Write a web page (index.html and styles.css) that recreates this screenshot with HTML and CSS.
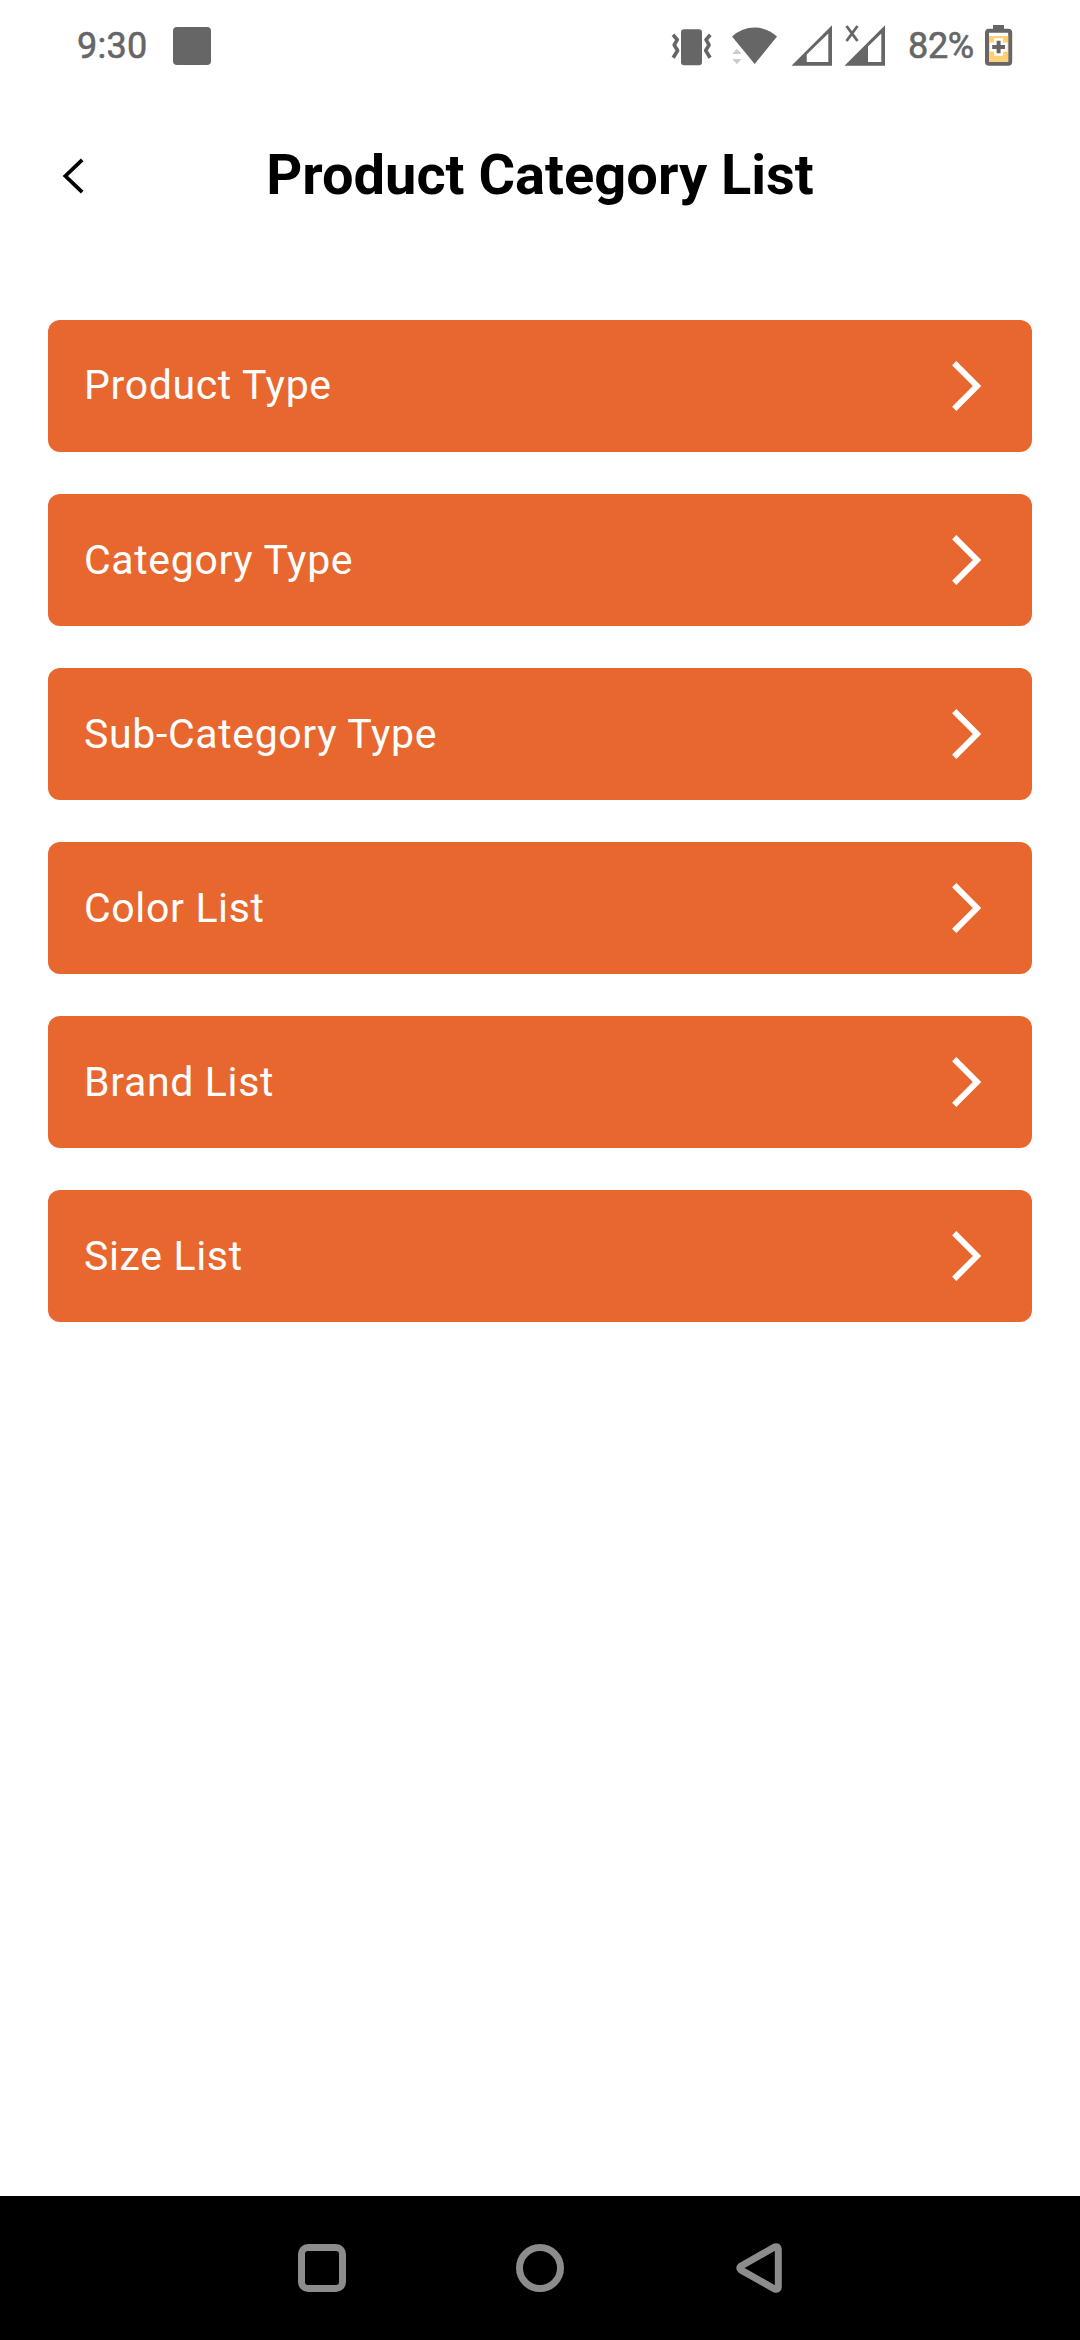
FILE: index.html
```html
<!DOCTYPE html>
<html lang="en">
<head>
<meta charset="utf-8">
<title>Product Category List</title>
<link rel="stylesheet" href="styles.css">
</head>
<body>
<div class="screen">
  <div class="status">
    <span class="clock">9:30</span>
    <span class="notification"></span>
    <svg class="status-icons" width="230" height="90" viewBox="660 0 230 90">
      <g fill="#666">
        <rect x="681" y="29.3" width="21" height="36" rx="3"/>
        <path d="M754.7 64 732 36.6Q742 27.6 754.7 27.6T777 36.6Z"/>
        <path fill="#ccc" d="M732.3 54h9.2l-4.6-5.2zM732.3 59h9.2l-4.6 5.2z"/>
        <path fill-rule="evenodd" d="M791.5 65.7 832 25.2V65.7ZM806.7 62H828.3V33.5L806.7 54.5Z"/>
        <path fill-rule="evenodd" d="M844.5 65.7 885 25.2V65.7ZM868 62H881.3V33.5L868 46.5Z"/>
      </g>
      <g fill="none" stroke="#666" stroke-width="3.6" stroke-linejoin="round">
        <path d="M673 34.8 677.3 39.7 674.2 45 677.6 50.5 673.2 57.7M710.3 34.8 706 39.7 709.1 45 705.7 50.5 710.1 57.7"/>
        <path stroke-width="2.8" d="M846.5 26 857.5 41M857.5 26 846.5 41"/>
      </g>
    </svg>
    <span class="percent">82%</span>
    <svg class="battery" width="28" height="42" viewBox="985 25 28 42">
      <path fill="#666" d="M993 25h11v4h-11z"/>
      <rect x="987" y="30.7" width="23.2" height="33" rx="2" fill="#fff" stroke="#666" stroke-width="4"/>
      <path fill="#ffcf70" d="M989 36h19.2v25.7H989z"/>
      <path stroke="#fff" stroke-width="9" d="M989.7 47h17.8M998.6 38.2v17.6"/>
      <path stroke="#666" stroke-width="4" d="M992.2 47h12.8M998.6 40.7v12.6"/>
    </svg>
  </div>
  <header class="header">
    <svg class="back" width="24" height="38" viewBox="62 157 24 38"><path d="M82.2 159.8 65.4 176 82.2 192.2" fill="none" stroke="#000" stroke-width="3.8"/></svg>
    <h1 class="title">Product Category List</h1>
  </header>
  <main class="list">
    <div class="row"><span>Product Type</span><svg class="chevron" viewBox="0 0 32 52"><path d="M3.2 3.2 26 26 3.2 48.8"/></svg></div>
    <div class="row"><span>Category Type</span><svg class="chevron" viewBox="0 0 32 52"><path d="M3.2 3.2 26 26 3.2 48.8"/></svg></div>
    <div class="row"><span>Sub-Category Type</span><svg class="chevron" viewBox="0 0 32 52"><path d="M3.2 3.2 26 26 3.2 48.8"/></svg></div>
    <div class="row"><span>Color List</span><svg class="chevron" viewBox="0 0 32 52"><path d="M3.2 3.2 26 26 3.2 48.8"/></svg></div>
    <div class="row"><span>Brand List</span><svg class="chevron" viewBox="0 0 32 52"><path d="M3.2 3.2 26 26 3.2 48.8"/></svg></div>
    <div class="row"><span>Size List</span><svg class="chevron" viewBox="0 0 32 52"><path d="M3.2 3.2 26 26 3.2 48.8"/></svg></div>
  </main>
  <nav class="nav">
    <svg viewBox="0 0 50 50"><rect x="4.5" y="4.5" width="41" height="41" rx="6.5"/></svg>
    <svg viewBox="0 0 50 50"><circle cx="25" cy="25" r="20.5"/></svg>
    <svg viewBox="-2 0 50 50"><path d="M5.7 23.2 40 3.8Q43.2 3 43.3 6.2V43.8Q43.2 47 40 46.2L5.7 26.8Q3.8 25 5.7 23.2Z"/></svg>
  </nav>
</div>
</body>
</html>
```
FILE: styles.css
```css
* { box-sizing: border-box; }
body { margin: 0; background: #fff; font-family: Roboto, sans-serif; }
.screen { width: 1080px; height: 2340px; display: flex; flex-direction: column; }
.status { height: 90px; display: flex; align-items: center; padding: 0 67px 0 77px; color: #666; font-size: 36px; line-height: 42px; -webkit-text-stroke: .6px #666; }
.clock { width: 96px; padding-top: 2px; letter-spacing: .3px; }
.notification { width: 38px; height: 38px; margin-top: 2px; border-radius: 4px; background: #666; }
.status-icons { margin-left: auto; }
.percent { width: 77px; margin-left: 17px; padding: 2px 0 0 1px; letter-spacing: -.3px; }
.battery { margin-left: 1px; margin-top: 2px; }
.header { height: 172px; display: grid; grid-template-columns: 100px 1fr 100px; align-items: center; padding: 0 62px; }
.title { margin: 0; padding-bottom: 2px; font-size: 56px; line-height: 66px; font-weight: 700; text-align: center; white-space: nowrap; }
.list { flex: 1; display: flex; flex-direction: column; gap: 42px; padding: 58px 48px 0; }
.row { height: 132px; border-radius: 12px; background: #e8672f; color: #fff; font-size: 41px; line-height: 48px; letter-spacing: .65px; display: flex; align-items: center; justify-content: space-between; padding: 0 49px 0 36px; }
.row:first-child span { padding-bottom: 2px; }
.chevron { width: 32px; height: 52px; fill: none; stroke: #fff; stroke-width: 6; }
.nav { height: 144px; background: #000; display: flex; justify-content: center; align-items: center; gap: 168px; }
.nav svg { width: 50px; height: 50px; fill: none; stroke: #8c8c8c; stroke-width: 7; }
```
